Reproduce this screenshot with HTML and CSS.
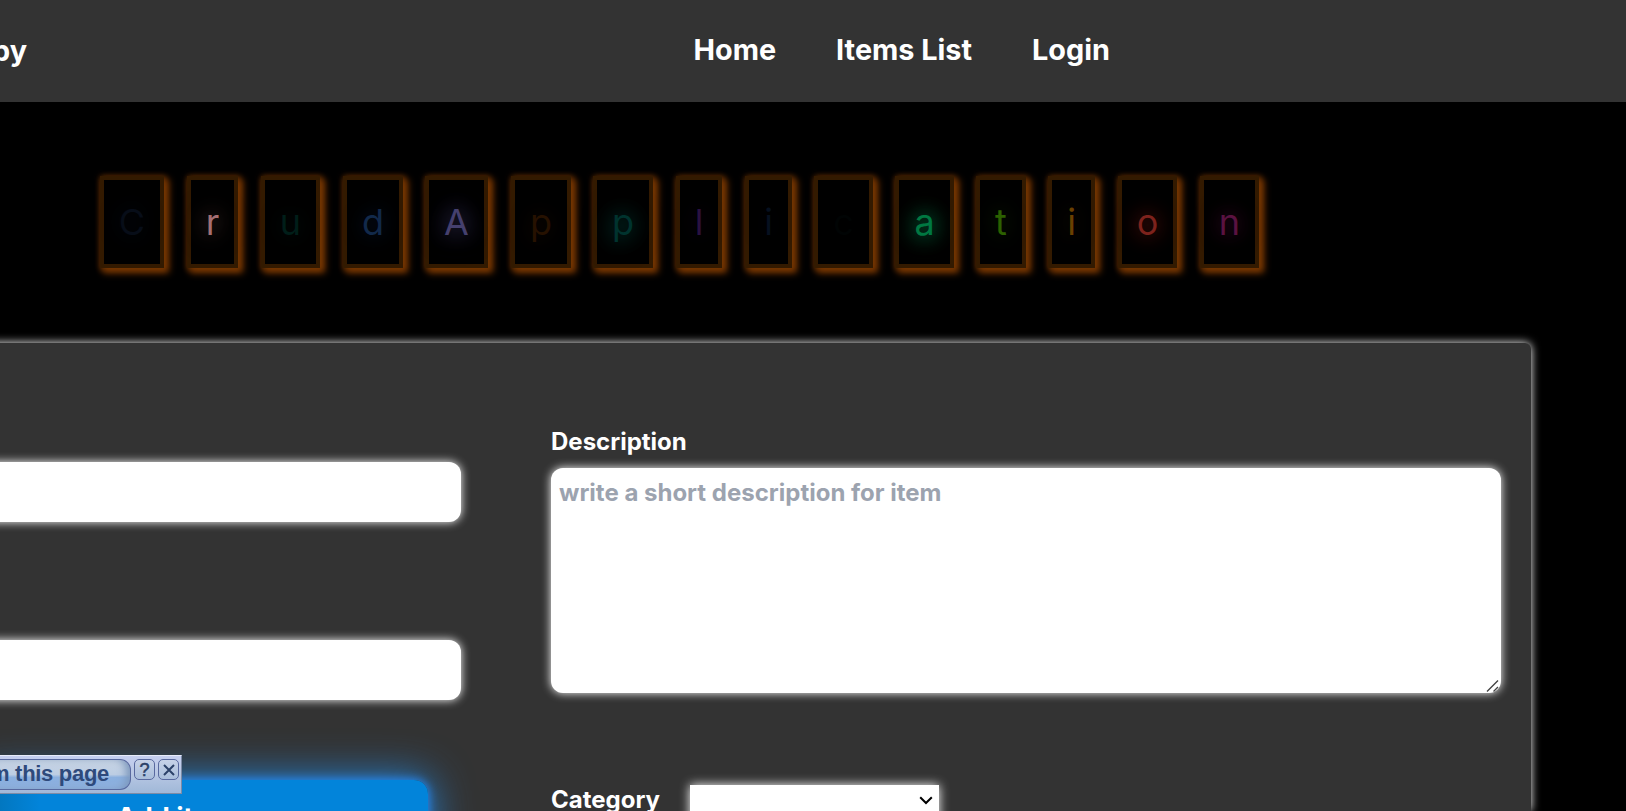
FILE: index.html
```html
<!DOCTYPE html>
<html lang="en">
<head>
<meta charset="utf-8">
<title>Add item</title>
<link rel="stylesheet" href="styles.css">
</head>
<body>
<header class="topbar">
  <span class="brand">by</span>
  <nav class="nav"><a>Home</a><a>Items List</a><a>Login</a></nav>
</header>
<h1 class="title">
  <span class="tile c1">C</span><span class="tile c2">r</span><span class="tile c3">u</span><span class="tile c4">d</span><span class="tile c5">A</span><span class="tile c6">p</span><span class="tile c7">p</span><span class="tile c8">l</span><span class="tile c9">i</span><span class="tile c10">c</span><span class="tile c11">a</span><span class="tile c12">t</span><span class="tile c13">i</span><span class="tile c14">o</span><span class="tile c15">n</span>
</h1>
<form class="panel">
  <div class="left">
    <input class="field" type="text">
    <input class="field" type="text">
    <button class="submit" type="button">Add item</button>
  </div>
  <div class="right">
    <label class="label" for="desc">Description</label>
    <div class="desc-wrap">
      <textarea class="desc" id="desc" placeholder="write a short description for item"></textarea>
      <svg class="grip" width="14" height="14" viewBox="0 0 14 14"><path d="M1 12.500 12 1.500M7.500 12.500l4.500-4.500" fill="none" stroke="#444" stroke-width="1.400"/></svg>
    </div>
    <div class="category">
      <label class="label">Category</label>
      <div class="select"><svg width="14" height="9" viewBox="0 0 14 9"><path d="M1.2 1.200 7 7l5.800-5.800" fill="none" stroke="#000" stroke-width="2"/></svg></div>
    </div>
  </div>
</form>
<div class="overlay">
  <div class="pill">m this page</div>
  <div class="mini">?</div>
  <div class="mini"><svg width="12" height="12" viewBox="0 0 12 12"><path d="M1 1l10 10M11 1 1 11" stroke="#2b4168" stroke-width="2"/></svg></div>
</div>
</body>
</html>
```
FILE: styles.css
```css
* { box-sizing: border-box; }
html, body { margin: 0; height: 811px; overflow: hidden; background: #000; }
body { position: relative; font-family: Inter, sans-serif; color: #fff; }
.topbar { height: 102px; background: #333; display: flex; align-items: center; font-size: 28.8px; font-weight: 700; line-height: 36px; }
.brand { width: 27px; flex: none; display: flex; justify-content: flex-end; white-space: nowrap; }
.nav { display: flex; gap: 60px; margin-left: 666.5px; white-space: nowrap; padding-bottom: 2px; }
.title { margin: 74px 0 0 100px; font-size: 36px; font-weight: 400; line-height: 40px; display: grid; grid-template-columns: 87px 74px 82px 82px 86px 82px 83px 69px 69px 81px 81px 72px 70px 82px 82px; height: 92px; }
.tile { display: flex; align-items: center; justify-content: center; margin-right: 23px; border: 4px solid #331a00; box-shadow: 4px 4px 7px 1px #773600, 1px 1px 6px 1px #5c2b00; }
.c4, .c6, .c9, .c10, .c11, .c12 { margin-right: 22px; }
.c1 { color: #070d18; text-shadow: 0 0 20px #081020; }
.c2 { color: #a56f73; text-shadow: 0 0 20px #6a4d49, 0 0 30px #3c2d2b; }
.c3 { color: #001e19; text-shadow: 0 0 20px #001815; }
.c4 { color: #12294a; text-shadow: 0 0 20px #0a1a38; }
.c5 { color: #45406e; text-shadow: 0 0 20px #302d55, 0 0 30px #302d55; }
.c6 { color: #261100; text-shadow: 0 0 20px #1c0c00; }
.c7 { color: #00332e; text-shadow: 0 0 20px #003f38, 0 0 30px #003f38; }
.c8 { color: #2a1141; text-shadow: 0 0 20px #180824; }
.c9 { color: #06101f; text-shadow: 0 0 20px #030811; }
.c10 { color: #010404; }
.c11 { color: #007842; text-shadow: 0 0 20px #007040, 0 0 24px #007040; }
.c12 { color: #2c6100; text-shadow: 0 0 20px #163600; }
.c13 { color: #6a4000; text-shadow: 0 0 20px #2a1a00; }
.c14 { color: #7d221c; text-shadow: 0 0 20px #59150f, 0 0 24px #59150f; }
.c15 { color: #5a1241; text-shadow: 0 0 20px #380a28, 0 0 24px #380a28; }
.panel { margin: 75px 0 0 -20px; width: 1551px; height: 468px; background: #333; border-radius: 6px 6px 0 0; box-shadow: 0 0 10px #fff; display: flex; padding-left: 20px; }
.left { width: 461px; display: flex; flex-direction: column; padding-top: 119px; }
.field { width: 481px; height: 60px; margin: 0 0 118px -20px; border: 0; border-radius: 12px; background: #fff; box-shadow: 0 0 10px #fff; flex: none; }
.submit { width: 448px; height: 72px; margin: -38px 0 0 -20px; border: 0; border-radius: 14px; background: linear-gradient(90deg, #0277c0 20px, #0284da 60px); box-shadow: 0 0 10px 1px #2585ee, 0 0 40px 3px #2585d8; color: #fff; font: 700 27px/32px Inter, sans-serif; flex: none; padding: 4px 58px 0 0; }
.right { margin-left: 90px; width: 950px; padding-top: 83px; display: flex; flex-direction: column; }
.label { font-size: 24px; line-height: 32px; font-weight: 700; }
.desc-wrap { position: relative; height: 225px; margin-top: 10px; flex: none; }
.desc { display: block; width: 950px; height: 225px; border: 0; border-radius: 12px; padding: 9px 8px; font: 700 24px/32px Inter, sans-serif; box-shadow: 0 0 10px #fff; background: #fff; resize: none; }
.desc::placeholder { color: #9ca3af; opacity: 1; }
.grip { position: absolute; right: 1px; bottom: 0; }
.category { display: flex; margin-top: 92px; height: 40px; align-items: flex-start; }
.category .label { width: 139px; margin-top: -1px; }
.select { width: 249px; height: 40px; background: #fff; box-shadow: 0 0 10px #fff; display: flex; justify-content: flex-end; padding: 11px 6px 0 0; }
.overlay { position: absolute; left: 0; top: 755px; width: 182px; height: 39px; background: linear-gradient(#c5cff0, #b9c8e4 45%, #a0b8d8); border: solid #7d8ba6; border-width: 0 1px 1px 0; border-top: 1px solid #e8ecfa; display: flex; gap: 3px; font-family: "Liberation Sans", sans-serif; font-weight: 700; color: #2e4a7c; }
.pill { width: 131px; height: 31px; margin-top: 3px; border: 1px solid #58699f; border-left: 0; border-radius: 0 11px 11px 0; background: linear-gradient(#cad6e5, #bccde3 50%, #8bb0df 60%, #8eb1df); font-size: 22px; line-height: 28px; white-space: nowrap; display: flex; justify-content: flex-end; padding-right: 21px; letter-spacing: -.3px; box-shadow: inset -6px 0 8px -2px #7d98bd; }
.mini { width: 21px; height: 21px; margin-top: 3px; border: 1px solid #58699f; border-radius: 5px; background: linear-gradient(#c6d2e8, #a9bedb); display: flex; align-items: center; justify-content: center; font-size: 18px; font-weight: 400; -webkit-text-stroke: .5px #2b4168; line-height: 18px; color: #2b4168; }
```
